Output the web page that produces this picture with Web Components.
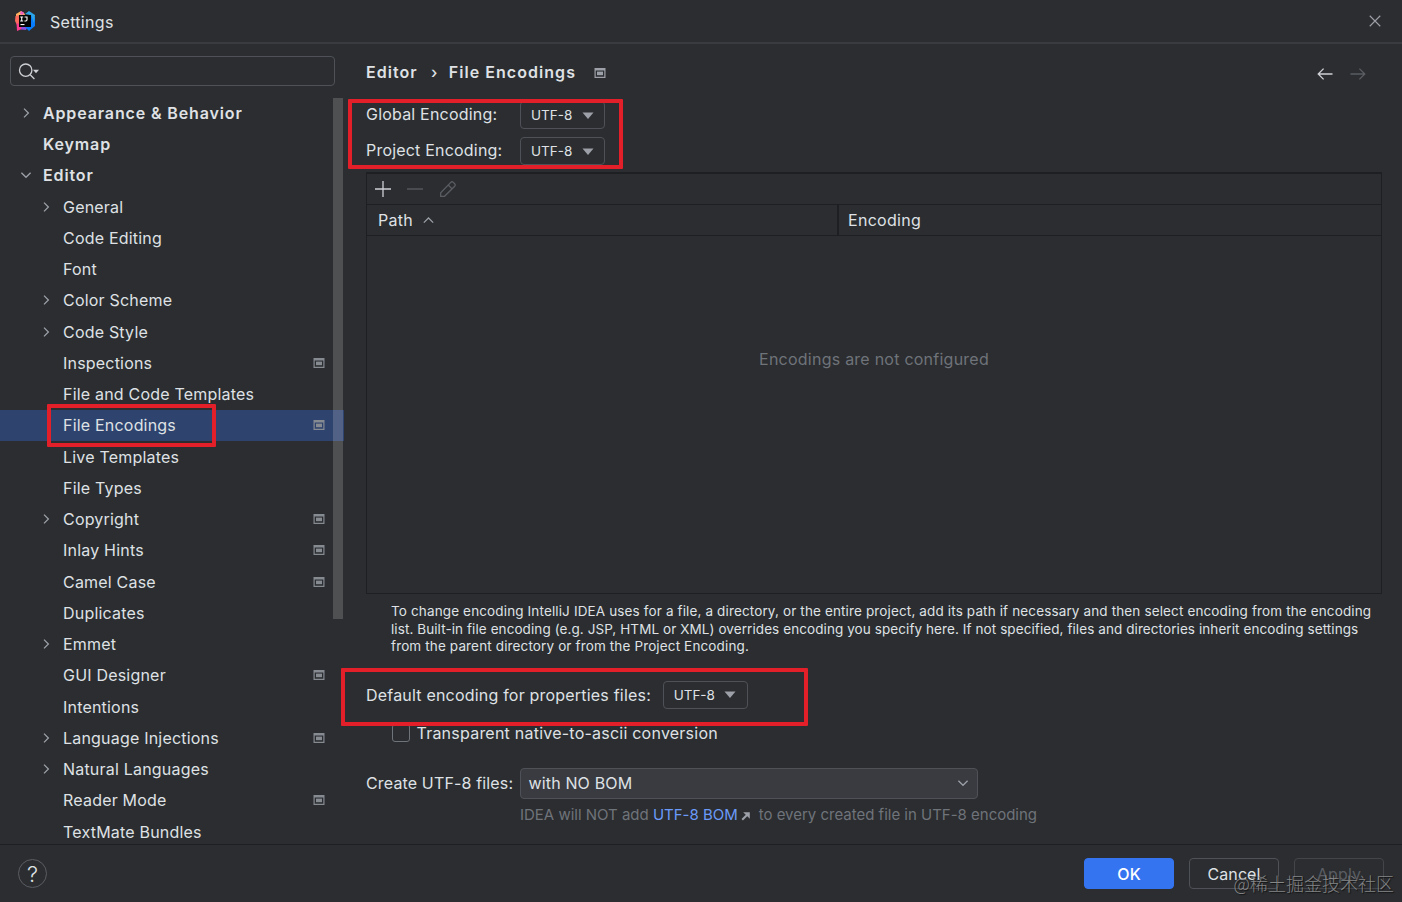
<!DOCTYPE html>
<html lang="en">
<head>
<meta charset="utf-8">
<title>Settings</title>
<style>
html, body { margin:0; height:100%; }
body {
    overflow:hidden; background:#2b2d30; color:#dfe1e5;
    font:16px/20px Inter, "Liberation Sans", sans-serif;
    letter-spacing:.2px;
}
</style>
</head>
<body>
<settings-dialog></settings-dialog>

<script>
const define = (name, html, setup) => customElements.define(name, class extends HTMLElement {
    constructor() {
        super();
        this.attachShadow({mode: 'open'}).innerHTML = html;
    }
    connectedCallback() {
        setup?.call(this, this.shadowRoot);
    }
});

const icons = {
    right:   [16, '<path d="M6 3.6 10.4 8 6 12.4"/>'],
    down:    [16, '<path d="M3.4 5.8 8 10.3l4.6-4.5"/>'],
    up:      [16, '<path d="M3 10.3 8 5.3l5 5"/>'],
    close:   [16, '<path d="M2 2 14 14M14 2 2 14"/>'],
    back:    [18, '<path d="M16.500 9H2M7.600 3.600 2.200 9l5.400 5.400"/>'],
    forward: [18, '<path d="M1.500 9H16M10.400 3.600 15.800 9l-5.400 5.400"/>'],
    plus:    [18, '<path d="M9 1v16M1 9h16"/>'],
    minus:   [18, '<path d="M1 9h16"/>'],
    edit:    [18, '<path d="M1.700 16.300v-3.600L11.800 2.400a1.800 1.800 0 0 1 2.500 0l1.400 1.400a1.800 1.800 0 0 1 0 2.500L5.500 16.300zM9.200 5l3.900 3.900"/>'],
    search:  [22, '<circle cx="8.7" cy="9.2" r="6.2"/><path d="m13.2 13.8 4.2 4.2"/><path d="M16 8.8h6l-3 3.4z" fill="currentColor" stroke="none"/>'],
    project: [12, '<path fill="currentColor" stroke="none" fill-rule="evenodd" d="M.5 1h11v10H.5zM1.7 3.6v6.2h8.6V3.6z"/><path fill="currentColor" stroke="none" d="M3 4.6h6v3.6H3z"/>'],
    caret:   [12, '<path fill="currentColor" stroke="none" d="M.5 2.6h11L6 9z"/>'],
    extern:  [10, '<path d="M1.200 8.800 6 4" stroke-width="2"/><path fill="currentColor" stroke="none" d="M2.200 1.200h6.600v6.600L6.800 5.800 4.200 3.200z"/>'],
    logo:    [22, `<g stroke="none">
        <path fill="#fdb060" d="M2 4 7 1l4 3-3 8H2z"/>
        <path fill="#fc6a5d" d="m1.500 6 4-1 3 10-5 1L1 11z"/>
        <path fill="#fe3b8e" d="m2.500 13 6 2 3 2.500-8.500 3.500z"/>
        <path fill="#8f4ce0" d="m8 14 6 2-2 4-5-.5z"/>
        <path fill="#087cfa" d="m11 17 4-13 6 3v9l-6 5z"/>
        <path fill="#2ba5e8" d="m11 4 4-3 6 4-1 8-3-8z"/>
        <path fill="#f060c0" d="m7 1 3 1.500L9 5 6 4z"/>
        <path fill="#050505" d="M5 5h12v12H5z"/>
        <path fill="#fff" d="M6.500 14h4v1.100h-4z"/></g>
        <path stroke="#fff" stroke-width="1.100" d="M6.200 7h3M7.700 7v4M6.200 11h3M10.600 7h2.400v2.800q0 1.200-1.200 1.200h-1.400"/>`],
};

define('ui-icon', `
    <style>
    :host { display:inline-flex; flex:none; color:#9da0a8; }
    svg { display:block; overflow:visible; fill:none; stroke:currentColor; stroke-width:1.3; }
    </style>
    <span></span>`,
    function(root) {
        const [size, body] = icons[this.getAttribute('name')];
        const w = this.getAttribute('size') || size;
        root.querySelector('span').innerHTML = `<svg width="${w}" height="${w}" viewBox="0 0 ${size} ${size}">${body}</svg>`;
    });

define('title-bar', `
    <style>
    :host { display:flex; align-items:center; box-sizing:border-box; height:44px; padding:0 20px 0 14px; border-bottom:2px solid #393b40; }
    .title { flex:1; margin-left:14px; padding-top:1px; letter-spacing:.3px; }
    </style>
    <ui-icon name=logo></ui-icon>
    <span class=title><slot></slot></span>
    <ui-icon name=close size=14></ui-icon>`);

define('search-box', `
    <style>
    :host { display:flex; align-items:center; box-sizing:border-box; height:30px; margin:0 0 0 10px; width:325px; padding:1px 0 0 6px; border:1px solid #4e5157; border-radius:4px; }
    ui-icon { color:#ced0d6; }
    </style>
    <ui-icon name=search></ui-icon>`);

define('tree-row', `
    <style>
    :host { display:flex; align-items:center; box-sizing:border-box; height:31.25px; padding:0 19.500px 0 17.500px; }
    :host([level="2"]) { padding-left:37.5px; }
    :host([level="1"]) { font-weight:600; letter-spacing:.87px; }
    :host([selected]) { background:#2e436e; }
    .arrow { display:flex; width:25.5px; }
    .text { flex:1; white-space:nowrap; }
    .mark { color:#868a91; }
    </style>
    <span class=arrow></span>
    <span class=text><slot></slot></span>`,
    function(root) {
        const open = this.getAttribute('open');
        if (open) root.querySelector('.arrow').innerHTML = `<ui-icon name=${open}></ui-icon>`;
        if (this.hasAttribute('project')) root.querySelector('.text').insertAdjacentHTML('afterend', '<ui-icon class=mark name=project></ui-icon>');
    });

define('settings-tree', `
    <style>
    :host { display:block; position:relative; height:746.7px; margin-top:11.3px; overflow:hidden; }
    /* the thumb lies over the rows */
    .thumb { position:absolute; right:1px; top:.7px; width:10px; height:521px; background:#fff; opacity:.17; }
    </style>
    <div class=rows></div>
    <div class=thumb></div>`,
    function(root) {
        // level, label, arrow, project level mark
        const rows = [
            [1, 'Appearance &amp; Behavior', 'right'],
            [1, 'Keymap'],
            [1, 'Editor', 'down'],
            [2, 'General', 'right'],
            [2, 'Code Editing'],
            [2, 'Font'],
            [2, 'Color Scheme', 'right'],
            [2, 'Code Style', 'right'],
            [2, 'Inspections', '', 1],
            [2, 'File and Code Templates'],
            [2, 'File Encodings', '', 1],
            [2, 'Live Templates'],
            [2, 'File Types'],
            [2, 'Copyright', 'right', 1],
            [2, 'Inlay Hints', '', 1],
            [2, 'Camel Case', '', 1],
            [2, 'Duplicates'],
            [2, 'Emmet', 'right'],
            [2, 'GUI Designer', '', 1],
            [2, 'Intentions'],
            [2, 'Language Injections', 'right', 1],
            [2, 'Natural Languages', 'right'],
            [2, 'Reader Mode', '', 1],
            [2, 'TextMate Bundles'],
        ];
        root.querySelector('.rows').innerHTML = rows.map(([level, label, open, project]) =>
            `<tree-row level=${level} ${open ? `open=${open}` : ''} ${project ? 'project' : ''} ${label === 'File Encodings' ? 'selected' : ''}>${label}</tree-row>`
        ).join('');
    });

define('small-combo', `
    <style>
    :host { display:flex; align-items:center; justify-content:space-between; box-sizing:border-box; width:85px; height:28px; padding:0 10.500px 0 10px; border:1px solid #4e5157; border-radius:4px; font-size:13.500px; letter-spacing:0; }
    ui-icon { padding-top:1px; }
    </style>
    <slot></slot>
    <ui-icon name=caret></ui-icon>`);

define('wide-combo', `
    <style>
    :host { display:flex; align-items:center; justify-content:space-between; box-sizing:border-box; width:458px; height:31px; padding:0 6px 0 7.500px; border:1px solid #4e5157; border-radius:4px; background:#393b40; }
    </style>
    <slot></slot>
    <ui-icon name=down></ui-icon>`);

define('form-row', `
    <style>
    :host { display:flex; align-items:center; }
    .label { white-space:nowrap; min-width:var(--label, 0); margin-right:var(--gap, 0); padding-bottom:var(--lift, 0); }
    </style>
    <span class=label><slot name=label></slot></span>
    <slot></slot>`);

define('encoding-table', `
    <style>
    :host { display:flex; flex-direction:column; box-sizing:border-box; height:422px; border:1px solid #1e1f22; border-top-width:2px; }
    .tools { display:flex; align-items:center; gap:15px; box-sizing:border-box; height:30px; padding:0 0 1px 7px; }
    .tools ui-icon { color:#5a5d63; }
    .tools ui-icon:first-child { color:#ced0d6; margin-right:-1px; }
    .head { display:flex; height:30px; border:solid #1e1f22; border-width:1px 0; letter-spacing:.3px; }
    .cell { display:flex; align-items:center; gap:8px; box-sizing:border-box; padding-left:11px; }
    .cell:first-child { width:472px; border-right:2px solid #1e1f22; }
    .cell + .cell { padding-left:9px; }
    .empty { flex:1; display:flex; align-items:center; justify-content:center; padding-bottom:112px; color:#6f737a; letter-spacing:.24px; }
    </style>
    <div class=tools><ui-icon name=plus></ui-icon><ui-icon name=minus></ui-icon><ui-icon name=edit></ui-icon></div>
    <div class=head>
        <div class=cell>Path <ui-icon name=up size=15></ui-icon></div>
        <div class=cell>Encoding</div>
    </div>
    <div class=empty><slot></slot></div>`);

define('check-box', `
    <style>
    :host { display:flex; align-items:center; gap:7px; }
    .box { box-sizing:border-box; width:18px; height:18px; border:1px solid #6f737a; border-radius:3px; }
    </style>
    <span class=box></span><slot></slot>`);

define('bread-crumb', `
    <style>
    :host { display:flex; align-items:center; height:24px; font-weight:600; letter-spacing:1.05px; }
    .sep { box-sizing:border-box; width:31px; padding-left:3px; text-align:center; font-weight:500; }
    ui-icon { padding-top:2px; }
    .mark { margin-left:17.5px; flex:1; }
    .back, .forward { padding-top:4px; margin-right:15px; }
    .back { color:#ced0d6; }
    .forward { color:#5a5d63; }
    </style>
    <slot name=parent></slot><span class=sep>›</span><slot></slot>
    <ui-icon class=mark name=project></ui-icon>
    <ui-icon class=back name=back></ui-icon>
    <ui-icon class=forward name=forward></ui-icon>`);

define('encoding-page', `
    <style>
    :host { display:flex; flex-direction:column; padding:16px 20px 0 22px; }
    form-row { height:28px; --label:154px; --lift:2px; }
    bread-crumb { margin-bottom:17px; }
    .second { margin:8px 0 7px; }
    .note { margin:9px 0 0 25px; font-size:13.5px; line-height:17.6px; letter-spacing:.137px; white-space:nowrap; }
    .tight { letter-spacing:.085px; }
    .props { margin-top:25px; --label:0; --gap:11.7px; --lift:0; }
    check-box { margin:14px 0 0 25.5px; letter-spacing:.23px; }
    .create { height:31px; margin-top:25px; --lift:0; letter-spacing:.15px; }
    .hint { margin:6px 0 0 154px; font-size:15px; letter-spacing:-.01px; color:#6f737a; white-space:nowrap; }
    .link { color:#6b9bfa; }
    .hint ui-icon { margin:0 8px 0 3px; vertical-align:-1px; }
    </style>
    <bread-crumb><span slot=parent>Editor</span><span>File Encodings</span></bread-crumb>
    <form-row><span slot=label>Global Encoding:</span><small-combo>UTF-8</small-combo></form-row>
    <form-row class=second><span slot=label>Project Encoding:</span><small-combo>UTF-8</small-combo></form-row>
    <encoding-table>Encodings are not configured</encoding-table>
    <div class=note>To change encoding IntelliJ IDEA uses for a file, a directory, or the entire project, add its path if necessary and then select encoding from the encoding<br>
        <span class=tight>list. Built-in file encoding (e.g. JSP, HTML or XML) overrides encoding you specify here. If not specified, files and directories inherit encoding settings</span><br>
        from the parent directory or from the Project Encoding.</div>
    <form-row class=props><span slot=label>Default encoding for properties files:</span><small-combo>UTF-8</small-combo></form-row>
    <check-box>Transparent native-to-ascii conversion</check-box>
    <form-row class=create><span slot=label>Create UTF-8 files:</span><wide-combo>with NO BOM</wide-combo></form-row>
    <div class=hint>IDEA will NOT add <span class=link>UTF-8 BOM</span><ui-icon name=extern></ui-icon>to every created file in UTF-8 encoding</div>`);

define('push-button', `
    <style>
    :host { display:flex; align-items:center; justify-content:center; box-sizing:border-box; width:90px; height:31px; border:1px solid #4e5157; border-radius:4px; letter-spacing:.1px; }
    :host([primary]) { background:#3574f0; border-color:#3574f0; color:#fff; font-weight:500; }
    :host([disabled]) { border-color:#43454a; color:#5a5d63; }
    </style>
    <slot></slot>`);

define('dialog-footer', `
    <style>
    :host { display:flex; align-items:center; gap:15px; box-sizing:border-box; height:58px; padding:0 18px; border-top:1px solid #1e1f22; }
    .help { display:flex; align-items:center; justify-content:center; box-sizing:border-box; width:29px; height:29px; margin-right:auto; padding-top:1px; border:1px solid #5a5d63; border-radius:50%; font-size:22px; font-weight:300; letter-spacing:0; }
    </style>
    <span class=help>?</span>
    <push-button primary>OK</push-button>
    <push-button>Cancel</push-button>
    <push-button disabled>Apply</push-button>`);

// red frame drawn over the dialog
define('mark-frame', `
    <style>
    :host { position:absolute; box-sizing:border-box; border:4px solid #e3202a; border-radius:1px; }
    </style>`,
    function() {
        const [x, y, w, h] = this.getAttribute('box').split(' ');
        Object.assign(this.style, {left: x+'px', top: y+'px', width: w+'px', height: h+'px'});
    });

define('settings-dialog', `
    <style>
    :host { display:flex; flex-direction:column; position:relative; height:902px; width:1402px; overflow:hidden; }
    .main { display:flex; height:800px; }
    .side { flex:none; width:344px; padding-top:12px; }
    encoding-page { flex:1; min-width:0; }
    .watermark { position:absolute; right:8px; bottom:7px; font:18px/24px "Noto Sans CJK SC", sans-serif; font-weight:300; letter-spacing:0; color:rgba(170,170,170,.72); text-shadow:1px 1px 1px rgba(0,0,0,.6); }
    </style>
    <title-bar>Settings</title-bar>
    <div class=main>
        <div class=side>
            <search-box></search-box>
            <settings-tree></settings-tree>
        </div>
        <encoding-page></encoding-page>
    </div>
    <dialog-footer></dialog-footer>
    <mark-frame box="348 99 275 70"></mark-frame>
    <mark-frame box="47 404 169 43"></mark-frame>
    <mark-frame box="341 668 467 58"></mark-frame>
    <div class=watermark>@稀土掘金技术社区</div>`);
</script>
</body>
</html>
